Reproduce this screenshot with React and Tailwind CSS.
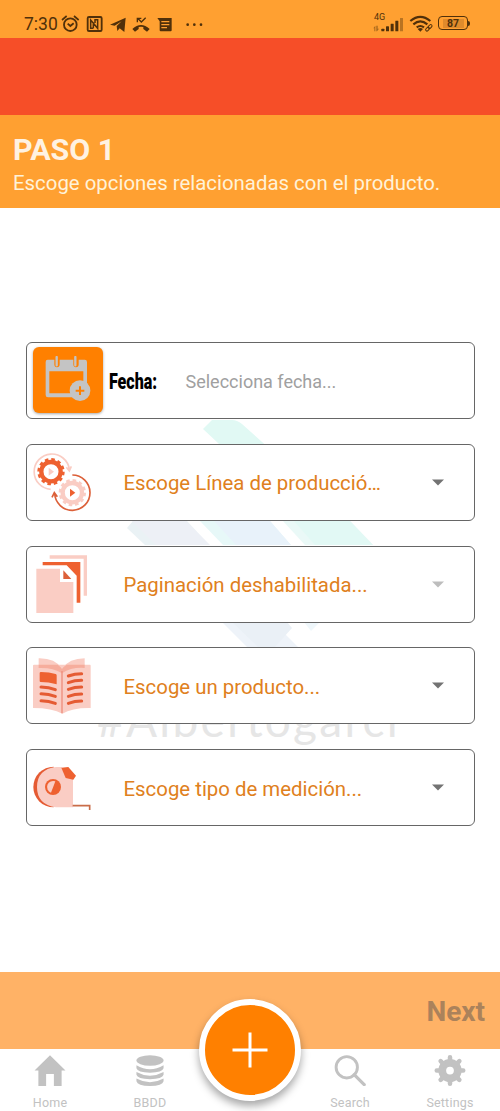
import React from "react";

const ORANGE = "#ee6130";
const PINK = "#facdc4";

function StatusBar() {
  return (
    <header className="flex h-[37.5px] shrink-0 items-end justify-between bg-[#ffa031] pb-[3.5px] pl-6 pr-[30px] text-[#50300a]">
      <div className="flex h-5 items-center">
        <span className="w-[37px] text-[17.5px] leading-5">7:30</span>
        <svg className="h-5 w-[146px]" viewBox="0 0 438 60" fill="none" stroke="currentColor" strokeWidth="5.5">
          <circle cx="28" cy="32" r="19" />
          <path d="M3 18L17 6M39 6l14 12" strokeWidth="5" />
          <path d="M20 29l8 7 10-8" />
          <rect x="80" y="9" width="42" height="42" rx="4" />
          <path d="M97 43h-8V18l21 25V17h-8v10M97 43V25" strokeWidth="4.5" />
          <path d="M147 32l47-21-4 43-14-11-7 8-2-15 15-14-21 13z" fill="currentColor" stroke="none" />
          <path d="M214 45q26-24 52 0l-8 8-11-8v-6q-7-2-14 0v6l-11 8z" fill="currentColor" stroke="none" />
          <path d="M229 25V13h12M230 13l11 11 13-13" strokeWidth="4" />
          <path d="M289 12h43v37q0 3-3 3h-30q-3 0-3-3V22z" fill="currentColor" stroke="none" />
          <path d="M301 23h24M301 32h24M301 41h17" stroke="#ffa031" strokeWidth="3.5" />
          <g fill="currentColor" stroke="none">
            <circle cx="380" cy="32" r="4" />
            <circle cx="400" cy="32" r="4" />
            <circle cx="420" cy="32" r="4" />
          </g>
        </svg>
      </div>
      <div className="flex h-[22px] items-center">
        <div className="flex h-[22px] w-[31px] flex-col">
          <span className="pl-px text-[9px] leading-[10px]">4G</span>
          <svg className="-mt-[6px] h-[18px] w-[31px] shrink-0" viewBox="0 0 93 54" fill="currentColor">
            <path d="M1 37l6-8v17H4V37zM12 46l6-8h-4v-9h-4v17z" opacity=".5" />
            <rect x="25" y="38" width="9" height="8" rx="2" />
            <rect x="39" y="31" width="9" height="15" rx="1" />
            <rect x="53" y="23" width="9" height="23" rx="1" />
            <rect x="67" y="14" width="9" height="32" rx="1" />
            <rect x="81" y="6" width="9" height="40" rx="1" opacity=".4" />
          </svg>
        </div>
        <svg className="ml-[5px] h-5 w-[25px]" viewBox="0 0 75 60" fill="none" stroke="currentColor" strokeWidth="6.5">
          <path d="M4 24q30-25 60 0M13 34q21-18 42 0M23 43q11-8 22 0" />
          <path d="M26 48q8-6 16 0l-8 8z" fill="currentColor" stroke="none" />
          <rect x="49" y="44" width="13" height="8" rx="4" transform="rotate(-45 56 48)" strokeWidth="3" />
          <rect x="57" y="37" width="13" height="8" rx="4" transform="rotate(-45 63 41)" strokeWidth="3" />
        </svg>
        <div className="ml-[4px] flex h-[14px] w-[30px] items-center justify-center rounded-[4px] border-[1.5px] border-[#50300a]">
          <span className="w-[21px] bg-[#df8b2c] text-center text-[10.5px] font-bold leading-[9px]">87</span>
        </div>
        <span className="h-[5px] w-[2px] rounded-r bg-[#50300a]" />
      </div>
    </header>
  );
}

function Watermark() {
  return (
    <div className="pointer-events-none absolute inset-0">
      <svg className="absolute left-0 top-[210px] h-[240px] w-[500px]" viewBox="0 418 500 240">
        <path d="M212 420q-4 4-9 9l15 14 40 45h55L242 424q-5-4-10-4z" fill="#e1f9f4" />
        <path d="M133 521l-6 7 18 17h64l-22-24z" fill="#eaf2f5" />
        <path d="M132 521l24 24h54l-24-24z" fill="#edf0f6" />
        <path d="M200 521l23 24h68l-21-24z" fill="#e7f8f8" />
        <path d="M214 521l22 24h55l-21-24z" fill="#e8f2fa" />
        <path d="M283 521l22 24h68l-23-24z" fill="#eaf9f7" />
        <path d="M294 521l21 24h58l-23-24z" fill="#e2f9f5" />
        <path d="M222 622l25 25h51l-18-18 10-7z" fill="#eef3f9" />
        <path d="M232 622l26 25h17l17-19-5-6z" fill="#eaf0f6" />
        <path d="M304 622l7 9 9-9z" fill="#eff7fb" />
      </svg>
      <span className="absolute left-[97px] top-[484px] whitespace-nowrap font-['Lato',sans-serif] text-[46px] leading-[56px] tracking-[2.3px] text-[#e6e6e6]">
        #Albertogarci
      </span>
    </div>
  );
}

function Gear({ x, y, color, inner }) {
  return (
    <g>
      <circle cx={x} cy={y} r="29" fill="none" stroke={color} strokeWidth="13" />
      <circle cx={x} cy={y} r="37" fill="none" stroke={color} strokeWidth="8" pathLength="120" strokeDasharray="5.5 4.5" />
      <path d={`M${x - 7} ${y - 12}l16 12-16 12z`} fill={inner} />
    </g>
  );
}

function GearsIcon() {
  return (
    <svg className="size-[60px] shrink-0" viewBox="36 66 180 180" fill="none">
      <path d="M92 178A53 53 0 1 1 148 118M139 112l9 11 6-14" stroke={PINK} strokeWidth="5" />
      <Gear x={93} y={125} color={ORANGE} inner={PINK} />
      <Gear x={157} y={188} color={PINK} inner={ORANGE} />
      <path d="M157 135A53 53 0 1 1 104 190M96 202l7-14 9 12" stroke="#dc6039" strokeWidth="5" />
    </svg>
  );
}

function PagesIcon() {
  return (
    <svg className="size-[60px] shrink-0" viewBox="36 57 180 180">
      <path d="M89 61h112v121h-10V71H89z" fill={PINK} />
      <path d="M68 81h113v122h-11v-81l-30-31H68z" fill={ORANGE} />
      <path d="M49 101h71v40h40v93H49z" fill={PINK} />
      <path d="M130 106v26h24z" fill="#dc6039" />
    </svg>
  );
}

function BookIcon() {
  return (
    <svg className="size-[60px] shrink-0" viewBox="36 47 180 180">
      <path d="M42 73h168q2 0 2 3v127q-55-1-85 17-30-17-88-17V76q0-3 3-3z" fill={PINK} />
      <path d="M56 54q49-1 70 31 22-31 68-31v29q-39-3-68 16-28-18-70-16z" fill={PINK} />
      <path d="M56 73h57q10 7 13 13 4-7 14-13h54v10q-39-3-68 16-28-18-70-16z" fill="#f5a594" opacity=".8" />
      <path d="M126 92v127" stroke="#ef8e7c" strokeWidth="4" />
      <path d="M63 95q25 0 44 6 3 1 3 4v27q-25-7-48-7-3 0-3-3V98q0-3 4-3z" fill={ORANGE} />
      <g fill="none" stroke="#e55b33" strokeWidth="9" strokeLinecap="round">
        <path d="M63 140q24 0 43 8M63 160q24 0 43 8M63 181q24 0 43 8" />
        <path d="M145 107q19-7 40-7M145 127q19-7 40-7M145 147q19-7 40-7M145 168q19-7 40-7M145 189q19-7 40-7" />
      </g>
    </svg>
  );
}

function TapeIcon() {
  return (
    <svg className="size-[60px] shrink-0" viewBox="36 352 180 180">
      <path d="M101 378a61 61 0 0 0 0 122z" fill="#e55b33" />
      <path d="M108 379h16l35 34v87h-51q-57-8-57-61t57-60z" fill={PINK} />
      <path d="M124 381l21-2 23 26-8 12-23-5z" fill={ORANGE} />
      <circle cx="99" cy="439" r="24" fill={ORANGE} />
      <path d="M106 422a18 18 0 1 0-13 34z" fill={PINK} />
      <path d="M158 495h51v13" fill="none" stroke="#c96d49" strokeWidth="5" />
    </svg>
  );
}

function DateField() {
  return (
    <div className="flex h-[77px] items-center rounded-[6px] border border-[#666] bg-white pl-1.5">
      <button className="mb-px flex h-[66px] w-[70px] shrink-0 items-center justify-center rounded-[6px] bg-[#ff8000] shadow-[0_1px_3px_rgba(0,0,0,0.35)]">
        <svg className="mb-[3px] h-[46px] w-[46px]" viewBox="75 62 138 138">
          <path d="M83 73h20v14q0 9 8 9t8-9V73h41v14q0 9 8 9t8-9V73h18q7 0 7 7v106H84q-7 0-7-7V80q0-7 6-7z" fill="#c4c4c4" />
          <path d="M110 65v25M166 65v25" stroke="#c4c4c4" strokeWidth="7" strokeLinecap="round" />
          <path d="M88 108h102v66H88z" fill="#ff8000" />
          <circle cx="180" cy="166" r="31" fill="#c4c4c4" />
          <path d="M180 153v26M167 166h26" stroke="#ff8000" strokeWidth="6" />
        </svg>
      </button>
      <span className="ml-[6px] w-[77px] pt-[5px]">
        <span className="inline-block origin-left scale-x-[0.73] text-[22px] font-black leading-6 text-black">Fecha:</span>
      </span>
      <span className="pt-[2px] text-[18px] text-[#a0a0a0]">Selecciona fecha...</span>
    </div>
  );
}

function SelectField({ icon, label, disabled }) {
  return (
    <div className="flex h-[77px] items-center rounded-[6px] border border-[#666] bg-white pl-[5px] pr-[30px]">
      {icon}
      <span className="ml-8 grow whitespace-nowrap pt-[2px] text-[20.4px] leading-6 text-[#df8020]">{label}</span>
      <svg className={disabled ? "h-[7px] w-3 text-[#bdbdbd]" : "h-[7px] w-3 text-[#737373]"} viewBox="0 0 12 7" fill="currentColor">
        <path d="M0 .5h12L6 6.5z" />
      </svg>
    </div>
  );
}

function NavItem({ label, children }) {
  return (
    <div className="flex w-[100px] flex-col items-center pt-1.5 text-[#c2c2c2]">
      <svg className="size-8" viewBox="0 0 96 96" fill="currentColor">{children}</svg>
      <span className="mt-[9px] text-[12.5px] leading-4 tracking-[0.2px]">{label}</span>
    </div>
  );
}

export default function App() {
  return (
    <div className="relative flex h-[1111px] w-[500px] flex-col overflow-hidden bg-white font-['Roboto',sans-serif]">
      <StatusBar />
      <div className="h-[77.5px] shrink-0 bg-[#f64e28]" />
      <section className="h-[93px] shrink-0 bg-[#ffa031] pl-[13px] pt-[17px]">
        <h1 className="text-[30.4px] font-bold leading-9 text-[#fff2e2]">PASO 1</h1>
        <p className="whitespace-nowrap pt-px text-[20.4px] leading-7 text-[#fff2d8]">Escoge opciones relacionadas con el producto.</p>
      </section>

      <main className="relative h-[764px] shrink-0 px-[25.5px] pt-[134px]">
        <Watermark />
        <div className="relative flex flex-col gap-[24.75px]">
          <DateField />
          <SelectField icon={<GearsIcon />} label="Escoge Línea de producció…" />
          <SelectField icon={<PagesIcon />} label="Paginación deshabilitada..." disabled />
          <SelectField icon={<BookIcon />} label="Escoge un producto..." />
          <SelectField icon={<TapeIcon />} label="Escoge tipo de medición..." />
        </div>
      </main>

      <div className="flex h-[77px] shrink-0 items-center justify-end bg-[#ffb266] pr-[15px] pt-[2px]">
        <span className="text-[28px] font-bold text-[#ab825b]">Next</span>
      </div>
      <nav className="flex h-[62px] shrink-0 bg-white">
        <NavItem label="Home">
          <path d="M48 1l48 47H84v48H60V59H36v37H12V48H0z" />
        </NavItem>
        <NavItem label="BBDD">
          <ellipse cx="48" cy="17" rx="42" ry="16" />
          <path d="M6 32q42 24 84 0v9q-3 13-42 14-39-1-42-14z" />
          <path d="M6 53q42 23 84 0v8q-3 13-42 14-39-1-42-14z" />
          <path d="M6 73q42 23 84 0v8q-3 14-42 15-39-1-42-15z" />
        </NavItem>
        <div className="w-[100px]" />
        <NavItem label="Search">
          <circle cx="38" cy="38" r="33" fill="none" stroke="currentColor" strokeWidth="9" />
          <path d="M61 61l31 31" stroke="currentColor" strokeWidth="10" strokeLinecap="round" />
        </NavItem>
        <NavItem label="Settings">
          <circle cx="48" cy="48" r="24" fill="none" stroke="currentColor" strokeWidth="24" />
          <path d="M48 7v16M48 73v16M7 48h16M73 48h16M19 19l13 13M64 64l13 13M19 77l13-13M64 32l13-13" stroke="currentColor" strokeWidth="14" strokeLinecap="round" />
        </NavItem>
      </nav>

      <button className="absolute left-[199px] top-[998.5px] flex size-[102px] items-center justify-center rounded-full border-[6px] border-white bg-[#ff8000] shadow-[0_5px_9px_rgba(0,0,0,0.35)]">
        <svg className="size-9" viewBox="0 0 36 36" stroke="white" strokeWidth="3">
          <path d="M18 .5v35M.5 18h35" />
        </svg>
      </button>
    </div>
  );
}
